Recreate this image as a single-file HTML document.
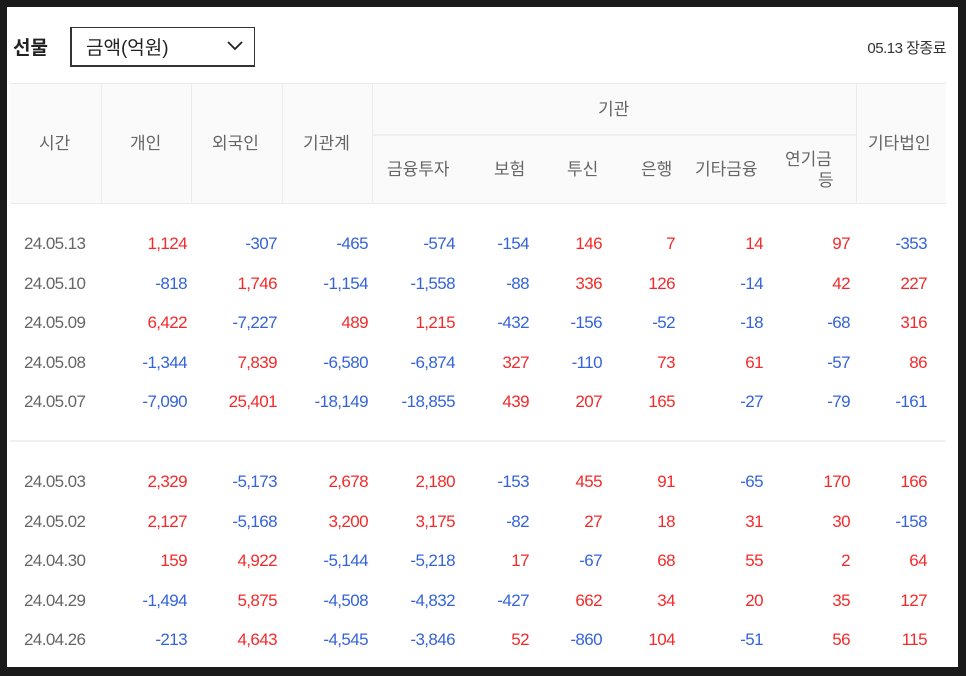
<!DOCTYPE html>
<html><head><meta charset="utf-8"><style>
*{margin:0;padding:0;box-sizing:border-box}
body{width:966px;height:676px;background:#1a1a1a;position:relative;overflow:hidden;font-family:"Liberation Sans","Noto Sans CJK KR",sans-serif}
#p{position:absolute;left:7px;top:7px;width:951px;height:660px;background:#fff}
.a{position:absolute;white-space:nowrap}
.h{color:#666;font-size:17px}
.r{color:#f42a2a}.b{color:#3563d9}.d{color:#666}
.row{position:absolute;left:0;width:966px;height:24px;font-size:17px;letter-spacing:-0.6px}
.row span{position:absolute;top:0}
.c0{left:24px}.c1{right:779px}.c2{right:689px}.c3{right:598px}.c4{right:511px}.c5{right:437px}.c6{right:364px}.c7{right:291px}.c8{right:203px}.c9{right:116px}.c10{right:39px}
</style></head><body>
<div id="p"></div>
<div class="a" style="left:13px;top:33px;font-size:19px;font-weight:bold;color:#222">선물</div>
<div class="a" style="left:70px;top:27px;width:185px;height:40px;border:1px solid #333;border-left-width:2px;border-bottom-width:2px;border-top-width:1px"></div>
<div class="a" style="left:86px;top:33px;font-size:19px;color:#222">금액(억원)</div>
<svg class="a" style="left:226px;top:40px" width="18" height="12" viewBox="0 0 18 12"><path d="M2 2 L9 9 L16 2" fill="none" stroke="#222" stroke-width="1.8"/></svg>
<div class="a" style="right:20px;top:37px;font-size:15px;color:#333;letter-spacing:-0.5px">05.13 장종료</div>

<div class="a" style="left:10px;top:83px;width:936px;height:121px;background:#fafafa;border-top:1px solid #ebebeb;border-bottom:1px solid #ebebeb"></div>
<div class="a" style="left:101px;top:84px;width:1px;height:119px;background:#ebebeb"></div>
<div class="a" style="left:191px;top:84px;width:1px;height:119px;background:#ebebeb"></div>
<div class="a" style="left:282px;top:84px;width:1px;height:119px;background:#ebebeb"></div>
<div class="a" style="left:372px;top:84px;width:1px;height:119px;background:#ebebeb"></div>
<div class="a" style="left:856px;top:84px;width:1px;height:119px;background:#ebebeb"></div>
<div class="a" style="left:373px;top:134px;width:483px;height:2px;background:#efefef"></div>

<div class="a h" style="left:39px;top:129px">시간</div>
<div class="a h" style="left:130px;top:129px">개인</div>
<div class="a h" style="left:212px;top:129px">외국인</div>
<div class="a h" style="left:303px;top:129px">기관계</div>
<div class="a h" style="left:598px;top:95px">기관</div>
<div class="a h" style="left:868px;top:129px">기타법인</div>
<div class="a h" style="left:387px;top:155px">금융투자</div>
<div class="a h" style="left:494px;top:155px">보험</div>
<div class="a h" style="left:567px;top:155px">투신</div>
<div class="a h" style="left:641px;top:155px">은행</div>
<div class="a h" style="left:695px;top:155px">기타금융</div>
<div class="a h" style="left:785px;top:145px">연기금</div>
<div class="a h" style="left:818px;top:166px">등</div>

<div class="a" style="left:10px;top:440px;width:936px;height:2px;background:#f0f0f0"></div>

<div class="row" style="top:234px"><span class="c0 d">24.05.13</span><span class="c1 r">1,124</span><span class="c2 b">-307</span><span class="c3 b">-465</span><span class="c4 b">-574</span><span class="c5 b">-154</span><span class="c6 r">146</span><span class="c7 r">7</span><span class="c8 r">14</span><span class="c9 r">97</span><span class="c10 b">-353</span></div>
<div class="row" style="top:274px"><span class="c0 d">24.05.10</span><span class="c1 b">-818</span><span class="c2 r">1,746</span><span class="c3 b">-1,154</span><span class="c4 b">-1,558</span><span class="c5 b">-88</span><span class="c6 r">336</span><span class="c7 r">126</span><span class="c8 b">-14</span><span class="c9 r">42</span><span class="c10 r">227</span></div>
<div class="row" style="top:313px"><span class="c0 d">24.05.09</span><span class="c1 r">6,422</span><span class="c2 b">-7,227</span><span class="c3 r">489</span><span class="c4 r">1,215</span><span class="c5 b">-432</span><span class="c6 b">-156</span><span class="c7 b">-52</span><span class="c8 b">-18</span><span class="c9 b">-68</span><span class="c10 r">316</span></div>
<div class="row" style="top:353px"><span class="c0 d">24.05.08</span><span class="c1 b">-1,344</span><span class="c2 r">7,839</span><span class="c3 b">-6,580</span><span class="c4 b">-6,874</span><span class="c5 r">327</span><span class="c6 b">-110</span><span class="c7 r">73</span><span class="c8 r">61</span><span class="c9 b">-57</span><span class="c10 r">86</span></div>
<div class="row" style="top:392px"><span class="c0 d">24.05.07</span><span class="c1 b">-7,090</span><span class="c2 r">25,401</span><span class="c3 b">-18,149</span><span class="c4 b">-18,855</span><span class="c5 r">439</span><span class="c6 r">207</span><span class="c7 r">165</span><span class="c8 b">-27</span><span class="c9 b">-79</span><span class="c10 b">-161</span></div>
<div class="row" style="top:472px"><span class="c0 d">24.05.03</span><span class="c1 r">2,329</span><span class="c2 b">-5,173</span><span class="c3 r">2,678</span><span class="c4 r">2,180</span><span class="c5 b">-153</span><span class="c6 r">455</span><span class="c7 r">91</span><span class="c8 b">-65</span><span class="c9 r">170</span><span class="c10 r">166</span></div>
<div class="row" style="top:512px"><span class="c0 d">24.05.02</span><span class="c1 r">2,127</span><span class="c2 b">-5,168</span><span class="c3 r">3,200</span><span class="c4 r">3,175</span><span class="c5 b">-82</span><span class="c6 r">27</span><span class="c7 r">18</span><span class="c8 r">31</span><span class="c9 r">30</span><span class="c10 b">-158</span></div>
<div class="row" style="top:551px"><span class="c0 d">24.04.30</span><span class="c1 r">159</span><span class="c2 r">4,922</span><span class="c3 b">-5,144</span><span class="c4 b">-5,218</span><span class="c5 r">17</span><span class="c6 b">-67</span><span class="c7 r">68</span><span class="c8 r">55</span><span class="c9 r">2</span><span class="c10 r">64</span></div>
<div class="row" style="top:591px"><span class="c0 d">24.04.29</span><span class="c1 b">-1,494</span><span class="c2 r">5,875</span><span class="c3 b">-4,508</span><span class="c4 b">-4,832</span><span class="c5 b">-427</span><span class="c6 r">662</span><span class="c7 r">34</span><span class="c8 r">20</span><span class="c9 r">35</span><span class="c10 r">127</span></div>
<div class="row" style="top:630px"><span class="c0 d">24.04.26</span><span class="c1 b">-213</span><span class="c2 r">4,643</span><span class="c3 b">-4,545</span><span class="c4 b">-3,846</span><span class="c5 r">52</span><span class="c6 b">-860</span><span class="c7 r">104</span><span class="c8 b">-51</span><span class="c9 r">56</span><span class="c10 r">115</span></div>
</body></html>
